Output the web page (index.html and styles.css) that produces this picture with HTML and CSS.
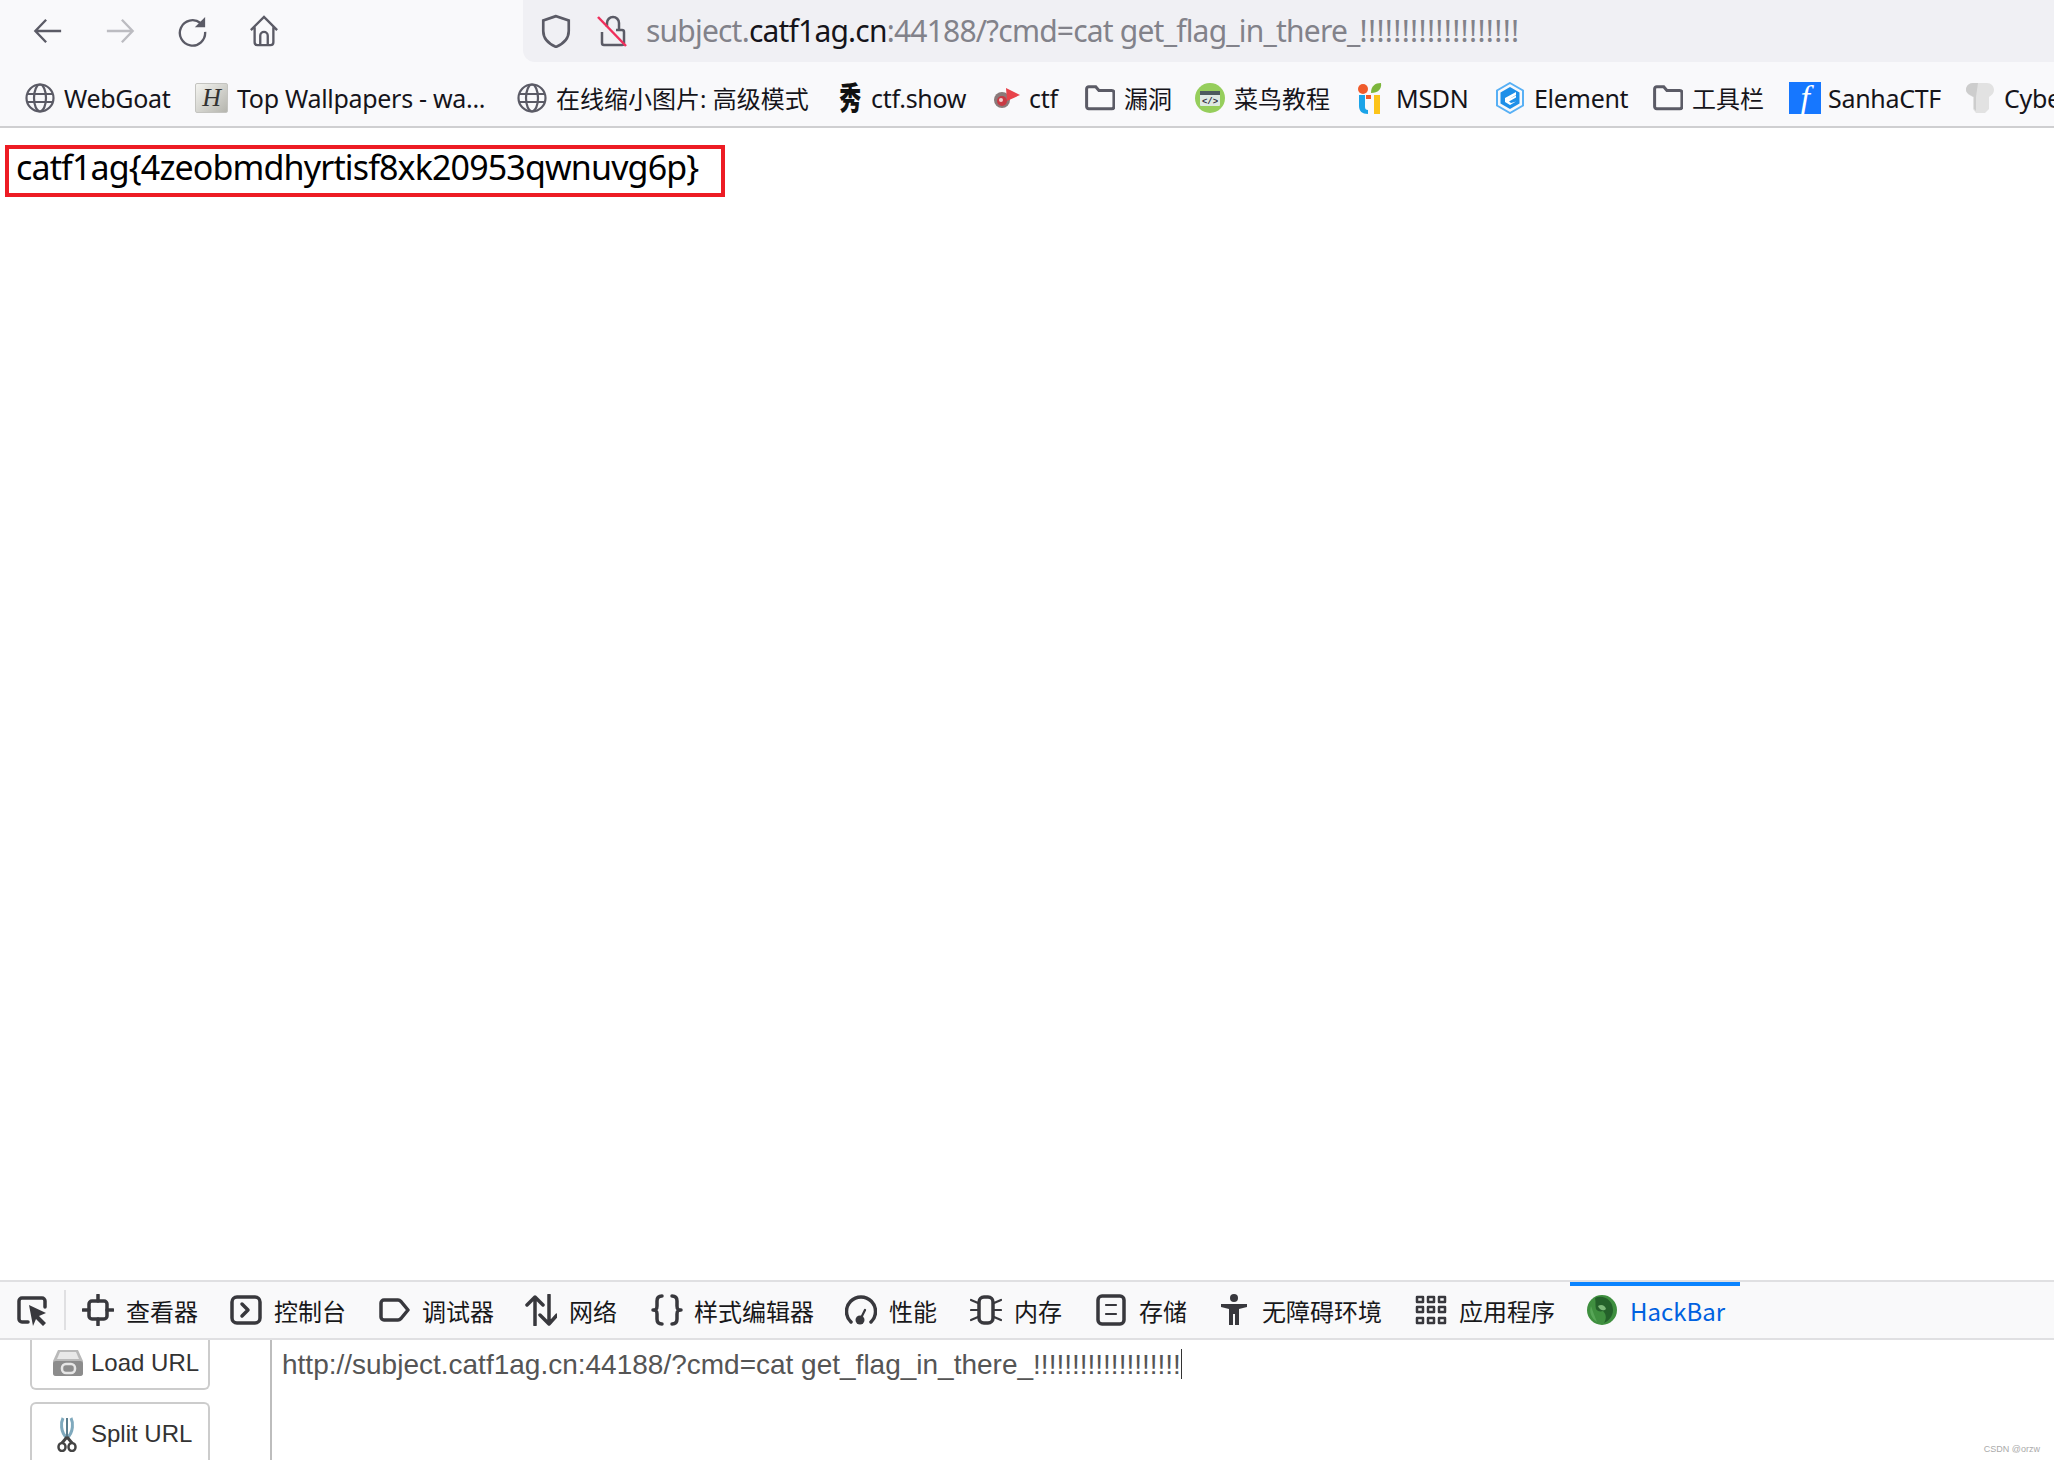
FILE: index.html
```html
<!DOCTYPE html>
<html lang="zh">
<head>
<meta charset="utf-8">
<title>catf1ag</title>
<link rel="stylesheet" href="styles.css">
</head>
<body>
<div class="app">
  <header class="chrome">
    <div class="navrow">
      <div class="navbtns">
        <svg class="nav" viewBox="0 0 32 32"><path d="M30 16H3M14 4 2.500 16 14 28" /></svg>
        <svg class="nav off" viewBox="0 0 32 32"><path d="M2 16h27M18 4l11.500 12L18 28" /></svg>
        <svg class="nav" viewBox="0 0 32 32"><path d="M25 7.500A13.500 13.500 0 1 0 30 17" /><path class="fill" d="M19 12h11V1z" /></svg>
        <svg class="nav" viewBox="0 0 32 32"><path d="M2 15 16 1l14 14M6 12v16a3 3 0 0 0 3 3h14a3 3 0 0 0 3-3V12M12 31V21a4 4 0 0 1 8 0v10" /></svg>
      </div>
      <div class="urlbar">
        <svg class="shield" viewBox="0 0 32 32"><path d="M16 2 4 6v10c0 7 5 12 12 15 7-3 12-8 12-15V6z" /></svg>
        <svg class="lock" viewBox="0 0 32 32"><path d="M20 15h6a2 2 0 0 1 2 2v11a2 2 0 0 1-2 2H8a2 2 0 0 1-2-2V17" /><path d="M11 12V8a6 6 0 0 1 12 0v7" /><path class="slash" d="M2 2 30 31" /></svg>
        <div class="urltext">subject.<b>catf1ag.cn</b>:44188/?cmd=cat get_flag_in_there_<span class="bangs">!!!!!!!!!!!!!!!!!!!</span></div>
      </div>
    </div>
    <nav class="bookmarks">
      <a class="bm w1"><svg class="ico globe" viewBox="0 0 30 30"><circle cx="15" cy="15" r="13.500" /><ellipse cx="15" cy="15" rx="6" ry="13.500" /><path d="M2 11h26M2 19h26" /></svg>WebGoat</a>
      <a class="bm w2"><span class="hicon">H</span>Top Wallpapers - wa...</a>
      <a class="bm w3 cjk"><svg class="ico globe" viewBox="0 0 30 30"><circle cx="15" cy="15" r="13.500" /><ellipse cx="15" cy="15" rx="6" ry="13.500" /><path d="M2 11h26M2 19h26" /></svg>在线缩小图片: 高级模式</a>
      <a class="bm w4"><svg class="ico small" viewBox="0 0 24 33"><text class="xiu" x="12" y="20" transform="scale(1 1.400)">秀</text></svg>ctf.show</a>
      <a class="bm w5"><svg class="ico ctf" viewBox="0 0 27 22"><circle cx="9" cy="13" r="8" fill="#8a7a7a" /><circle cx="9" cy="14" r="5" fill="#c93a44" /><circle cx="8" cy="13" r="2" fill="#f0d0d0" /><path d="M13 1 27 8 14 14z" fill="#e8434b" /></svg>ctf</a>
      <a class="bm w6 cjk"><svg class="ico folder" viewBox="1 3 28 24"><path d="M2.500 23V6.500a2 2 0 0 1 2-2h6.500l3 3.500h12a2 2 0 0 1 2 2V23a2 2 0 0 1-2 2h-21.500a2 2 0 0 1-2-2z" /></svg>漏洞</a>
      <a class="bm w7 cjk"><svg class="ico tall" viewBox="0 0 30 32"><circle cx="15" cy="16" r="15" fill="#96ce5c" /><rect x="5" y="9" width="20" height="15" rx="1" fill="#dfe9e4" /><rect x="5" y="9" width="20" height="4" fill="#4d5a5f" /><text x="15" y="22" class="code">&lt;/&gt;</text></svg>菜鸟教程</a>
      <a class="bm w8"><svg class="ico tall" viewBox="0 0 30 32"><circle cx="6" cy="7" r="5" fill="#ef5b2b" /><path d="M14 11C14 4 18 1 24 1c1 6-3 10-10 10z" fill="#7cb63b" /><path d="M2 13h6v12c0 2 1 3 3 3v4C5 32 2 29 2 24z" fill="#1aa3e8" /><path d="M17 13h6v19h-6z" fill="#fcc419" /><path d="M9 13h5v4H9z" fill="#ef5b2b" /></svg>MSDN</a>
      <a class="bm w9"><svg class="ico tall" viewBox="0 0 30 32"><path d="M15 1 28 8.500v15L15 31 2 23.500v-15z" fill="none" stroke="#58b0f5" stroke-width="2" /><path d="M15 5 24.500 10.500v11L15 27 5.500 21.500v-11z" fill="#1e8fe8" /><path d="m21 10-11 6v4l5 3 6-3.500-5 1.500-2-1.500 7-4v-2l-7 3.500 7-4z" fill="#fff" /></svg>Element</a>
      <a class="bm w10 cjk"><svg class="ico folder" viewBox="1 3 28 24"><path d="M2.500 23V6.500a2 2 0 0 1 2-2h6.500l3 3.500h12a2 2 0 0 1 2 2V23a2 2 0 0 1-2 2h-21.500a2 2 0 0 1-2-2z" /></svg>工具栏</a>
      <a class="bm w11"><span class="sanha">f</span>SanhaCTF</a>
      <a class="bm w12"><svg class="ico tall" viewBox="0 0 30 32"><path d="M8 1h14c4 0 7 3 7 7 0 3-2 5-5 7v12l-4 4h-9l-3-4V15C4 13 1 11 1 8c0-4 3-7 7-7z" fill="#e2e2e2" /><path d="M8 1h5l-2 14v14l-2-2V15C5 13 1 11 1 8c0-4 3-7 7-7z" fill="#cdcdcd" /></svg>Cyber</a>
    </nav>
  </header>
  <main class="page">
    <div class="flagbox">catf1ag{4zeobmdhyrtisf8xk20953qwnuvg6p}</div>
  </main>
  <section class="devtools">
    <div class="tabs">
      <div class="picker">
        <svg class="dt" viewBox="0 0 32 32"><path d="M12 28H6a3 3 0 0 1-3-3V7a3 3 0 0 1 3-3h20a3 3 0 0 1 3 3v6" /><path class="fill" d="M13 11 30 19l-7 3 7 7-3 3-7-7-3 7z" /></svg>
      </div>
      <div class="tab t1"><svg class="dt" viewBox="0 0 32 32"><rect x="7" y="7" width="18" height="18" rx="3" /><path d="M16 1v6M16 25v6M1 16h6M25 16h6" /></svg>查看器</div>
      <div class="tab t2"><svg class="dt" viewBox="0 0 32 32"><rect x="2" y="3" width="28" height="26" rx="5" /><path d="m12 10 6 6-6 6" /></svg>控制台</div>
      <div class="tab t3"><svg class="dt" viewBox="0 0 32 32"><path d="M3 9a3 3 0 0 1 3-3h14c1 0 2 .5 3 1.500L30 16l-7 8.500c-1 1-2 1.500-3 1.500H6a3 3 0 0 1-3-3z" /></svg>调试器</div>
      <div class="tab t4"><svg class="dt" viewBox="0 0 32 32"><path d="M10 31V3M2 11l8-8 8 8M24 1v28M15 21l9 9 8-9" /></svg>网络</div>
      <div class="tab t5"><svg class="dt" viewBox="0 0 32 32"><path d="M11 2C7 2 6 4 6 7v5c0 3-1 4-4 4 3 0 4 1 4 4v5c0 3 1 5 5 5M21 2c4 0 5 2 5 5v5c0 3 1 4 4 4-3 0-4 1-4 4v5c0 3-1 5-5 5" /></svg>样式编辑器</div>
      <div class="tab t6"><svg class="dt" viewBox="0 0 32 32"><path d="M6 28A14.500 14.500 0 1 1 26 28" /><circle class="fill" cx="15" cy="26" r="4.500" /><path class="thin" d="m15 26 5-10" /></svg>性能</div>
      <div class="tab t7"><svg class="dt" viewBox="0 0 32 32"><rect x="9" y="3" width="14" height="26" rx="5" /><path class="thin" d="M1 6l7 3M1 16h7M1 26l7-3M24 9l7-3M24 16h7M24 23l7 3" /></svg>内存</div>
      <div class="tab t8"><svg class="dt" viewBox="0 0 32 32"><rect x="3" y="2" width="26" height="28" rx="4" /><path class="thin" d="M11 11h10M11 20h10" /></svg>存储</div>
      <div class="tab t9"><svg class="dt" viewBox="0 0 32 32"><circle class="fill" cx="16" cy="4" r="4" /><path class="fill" d="M3 10h26v3l-8 2v16h-4v-11h-2v11h-4V15l-8-2z" /></svg>无障碍环境</div>
      <div class="tab t10"><svg class="dt thin2" viewBox="0 0 32 32"><rect x="2" y="3" width="6" height="5" /><rect x="13" y="3" width="6" height="5" /><rect x="24" y="3" width="6" height="5" /><rect x="2" y="13" width="6" height="5" /><rect x="13" y="13" width="6" height="5" /><rect x="24" y="13" width="6" height="5" /><rect x="2" y="24" width="6" height="5" /><rect x="13" y="24" width="6" height="5" /><rect x="24" y="24" width="6" height="5" /></svg>应用程序</div>
      <div class="tab active"><svg class="fox" viewBox="0 0 32 32"><circle cx="16" cy="16" r="15" fill="#3f8f3f" /><path d="M9 4c8-4 18 2 18 12 0 6-4 11-9 13 3-5 2-9-1-12-3 1-6 0-7-2-1-3 0-7-1-11z" fill="#24612a" /><path d="M12 12c3-2 7-1 8 3-2 2-6 2-8-3z" fill="#7cb878" /><path d="M5 12c-2 6 0 12 6 16-2-5-4-10-6-16z" fill="#57a657" /></svg>HackBar</div>
    </div>
    <div class="hackbar">
      <aside class="actions">
        <button class="action load"><svg class="btnico" viewBox="0 0 32 28"><path d="M6 1h20l5 11v12a3 3 0 0 1-3 3H4a3 3 0 0 1-3-3V12z" fill="#b9b9b9" /><path d="M8 3h16l3 7H5z" fill="#e8e8e8" /><rect x="1" y="12" width="30" height="15" rx="3" fill="#8c8c8c" /><rect x="10" y="15" width="13" height="9" rx="4" fill="none" stroke="#e6e6e6" stroke-width="2.500" /></svg>Load URL</button>
        <button class="action split"><svg class="btnico" viewBox="0 0 20 35"><path d="M10 21C3 15 4 5 6 1M10 21c7-6 6-16 4-20" fill="none" stroke="#7fa9bd" stroke-width="3" /><path d="M10 21V1" stroke="#5a7c8c" stroke-width="2" /><path d="M10 20 5 26M10 20l5 6" stroke="#444" stroke-width="3" /><ellipse cx="5" cy="30" rx="3.500" ry="4" fill="none" stroke="#444" stroke-width="2.500" /><ellipse cx="15" cy="30" rx="3.500" ry="4" fill="none" stroke="#444" stroke-width="2.500" /></svg>Split URL</button>
      </aside>
      <div class="editor"><span class="url">http://subject.catf1ag.cn:44188/?cmd=cat get_flag_in_there_!!!!!!!!!!!!!!!!!!!</span><span class="caret"></span></div>
      <div class="mark">CSDN @orzw</div>
    </div>
  </section>
</div>
</body>
</html>
```
FILE: styles.css
```css
* { box-sizing: border-box; }
html, body { margin: 0; padding: 0; height: 100%; overflow: hidden; background: #fff; }
.app { display: flex; flex-direction: column; width: 2054px; height: 1460px; font-family: "Noto Sans", "Noto Sans CJK SC", sans-serif; color: #15141a; }

.chrome { flex: none; height: 128px; background: #f9f9fb; border-bottom: 2px solid #cfcfd1; display: flex; flex-direction: column; }
.navrow { height: 62px; flex: none; display: flex; }
.navbtns { width: 523px; display: flex; align-items: center; padding: 0 0 0 33px; gap: 42px; }
.nav { width: 30px; height: 32px; fill: none; stroke: #5b5b66; stroke-width: 2.500; flex: none; }
.nav.off { stroke: #bcbcc1; }
.nav .fill { fill: #5b5b66; stroke: none; }
.urlbar { flex: 1; background: #f0f0f4; border-bottom-left-radius: 12px; display: flex; align-items: center; padding-left: 16px; }
.shield { width: 34px; height: 34px; fill: none; stroke: #5b5b66; stroke-width: 2.500; flex: none; }
.lock { width: 32px; height: 34px; margin-left: 23px; fill: none; stroke: #5b5b66; stroke-width: 2.500; flex: none; }
.lock .slash { stroke: #f02f5c; }
.urltext { margin-left: 18px; font-size: 30px; color: #82828a; white-space: nowrap; letter-spacing: -0.800px; margin-top: -2px; }
.urltext b { font-weight: 400; color: #15141a; }
.bangs { letter-spacing: 0.350px; }

.bookmarks { flex: 1; display: flex; align-items: center; padding-top: 7px; font-size: 25px; white-space: nowrap; overflow: hidden; letter-spacing: -0.300px; }
.bm { display: flex; align-items: center; flex: none; gap: 9px; }
.cjk { font-size: 24px; letter-spacing: 0; }
.w1 { margin-left: 25px; width: 170px; }
.w2 { width: 322px; }
.w3 { width: 321px; }
.w4 { width: 155px; }
.w5 { width: 92px; }
.w6 { width: 110px; }
.w7 { width: 162px; }
.w8 { width: 138px; }
.w9 { width: 158px; }
.w10 { width: 136px; }
.w11 { width: 176px; gap: 7px; }
.ico { width: 30px; height: 30px; flex: none; }
.ico.tall { height: 32px; }
.globe { fill: none; stroke: #5b5b66; stroke-width: 2.200; }
.folder { height: 26px; fill: none; stroke: #5b5b66; stroke-width: 2.800; }
.ico.small { width: 24px; height: 33px; }
.ico.ctf { width: 27px; height: 22px; }
.xiu { font-family: "Noto Sans CJK SC", sans-serif; font-size: 22px; font-weight: 900; text-anchor: middle; fill: #111; }
.code { font-family: "Liberation Mono", monospace; font-size: 9px; text-anchor: middle; fill: #334; font-weight: 700; }
.hicon { width: 33px; height: 30px; flex: none; display: flex; align-items: center; justify-content: center; font-family: "Liberation Serif", serif; font-style: italic; font-size: 26px; color: #333; background: linear-gradient(135deg, #f4f4f0, #b5b5ae); border: 1px solid #c4c4c0; border-radius: 2px; }
.sanha { width: 32px; height: 32px; flex: none; background: #1677ff; color: #fff; font-family: "Liberation Serif", serif; font-style: italic; font-size: 34px; display: flex; align-items: center; justify-content: center; }

.page { flex: 1; padding: 17px 0 0 5px; }
.flagbox { width: 720px; height: 52px; border: 4px solid #ed1c24; font-size: 34px; line-height: 36px; padding-left: 7px; color: #000; white-space: nowrap; letter-spacing: -0.860px; }

.devtools { flex: none; height: 180px; display: flex; flex-direction: column; }
.tabs { height: 60px; flex: none; background: #f9f9fa; border-top: 2px solid #e0e0e2; border-bottom: 2px solid #e0e0e2; display: flex; align-items: center; font-size: 24px; color: #18181a; font-family: "Noto Sans CJK SC", "Noto Sans", sans-serif; }
.picker { width: 66px; height: 40px; padding-left: 16px; display: flex; align-items: center; border-right: 2px solid #e0e0e2; flex: none; }
.tab { display: flex; align-items: center; gap: 12px; flex: none; height: 100%; white-space: nowrap; }
.dt { width: 32px; height: 32px; flex: none; fill: none; stroke: #38383d; stroke-width: 3.500; stroke-linejoin: round; stroke-linecap: round; }
.dt .fill { fill: #38383d; stroke: none; }
.dt .thin { stroke-width: 2.200; }
.thin2 { stroke-width: 2.500; }
.t1 { margin-left: 16px; width: 148px; }
.t2 { width: 148px; }
.t3 { width: 147px; }
.t4 { width: 126px; }
.t5 { width: 194px; gap: 11px; }
.t6 { width: 125px; }
.t7 { width: 125px; }
.t8 { width: 123px; }
.t9 { width: 197px; }
.t10 { width: 155px; }
.active { width: 170px; padding-left: 16px; color: #0061e0; box-shadow: inset 0 4px 0 #0a84ff; }
.fox { width: 32px; height: 32px; flex: none; }

.hackbar { flex: 1; display: flex; font-family: "Liberation Sans", sans-serif; position: relative; overflow: hidden; }
.actions { width: 272px; flex: none; border-right: 2px solid #bdbdbd; padding-left: 30px; display: flex; flex-direction: column; gap: 12px; }
.action { width: 180px; flex: none; background: #fff; border: 2px solid #ccc; display: flex; align-items: center; font-family: inherit; font-size: 24px; color: #333; padding: 0 0 0 20px; gap: 7px; }
.load { height: 50px; border-top: none; border-radius: 0 0 6px 6px; padding-bottom: 2px; }
.split { height: 62px; border-bottom: none; border-radius: 6px 6px 0 0; padding-left: 25px; gap: 14px; }
.btnico { width: 32px; height: 28px; flex: none; }
.split .btnico { width: 20px; height: 35px; }
.editor { flex: 1; padding: 7px 0 0 10px; font-size: 28px; line-height: 36px; color: #555; display: flex; align-items: flex-start; white-space: nowrap; }
.caret { width: 1px; height: 30px; background: #333; margin-top: 2px; }
.mark { position: absolute; right: 14px; bottom: 6px; font-size: 9px; color: #aaa; }
```
